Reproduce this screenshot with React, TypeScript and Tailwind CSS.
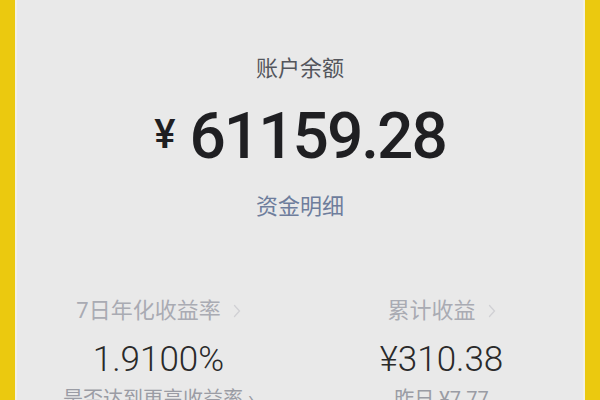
import React from 'react';

const font = { fontFamily: '"Roboto", "Noto Sans CJK SC", sans-serif' };

const Chevron = () => (
  <svg width="8" height="14" viewBox="0 0 8 14" className="ml-3 text-[#d0d0d4]">
    <path d="M1.5 1.5 L6.5 7 L1.5 12.5" fill="none" stroke="currentColor" strokeWidth="1.3" strokeLinecap="round" />
  </svg>
);

const Stat = ({ label, value, hint }: { label: string; value: string; hint: string }) => (
  <div className="flex flex-col items-center">
    <div className="flex items-center text-[22px] leading-none text-[#a9abb3]">
      {label}
      <Chevron />
    </div>
    <div className="mt-[20px] text-[35px] leading-none font-light text-[#2a2a2a]">{value}</div>
    <div className="mt-[12px] text-[20px] leading-none text-[#9a9ca4] whitespace-nowrap">{hint}</div>
  </div>
);

export default function App() {
  return (
    <div className="w-[600px] h-[400px] overflow-hidden flex bg-[#eccb12]" style={font}>
      <div className="w-[15px] bg-[#ebc90f]" />
      <div className="flex-1 bg-[#e9e9e9] border-x-[2px] border-[#f3f1e4] flex flex-col items-center">
        <div className="mt-[58px] text-[22px] leading-none text-[#54565c]">账户余额</div>
        <div className="mt-[25px] flex items-center text-[#1f1f22] font-medium leading-none">
          <span className="text-[40px] mr-[14px] -mt-[4px]">¥</span>
          <span className="text-[64px] tracking-[-2px]">61159.28</span>
        </div>
        <div className="mt-[27px] text-[22px] leading-none text-[#6e7d9c]">资金明细</div>
        <div className="mt-[82px] w-full grid grid-cols-2">
          <Stat label="7日年化收益率" value="1.9100%" hint="是否达到更高收益率 ›" />
          <Stat label="累计收益" value="¥310.38" hint="昨日 ¥7.77" />
        </div>
      </div>
      <div className="w-[15px] bg-[#ebc90f]" />
    </div>
  );
}
